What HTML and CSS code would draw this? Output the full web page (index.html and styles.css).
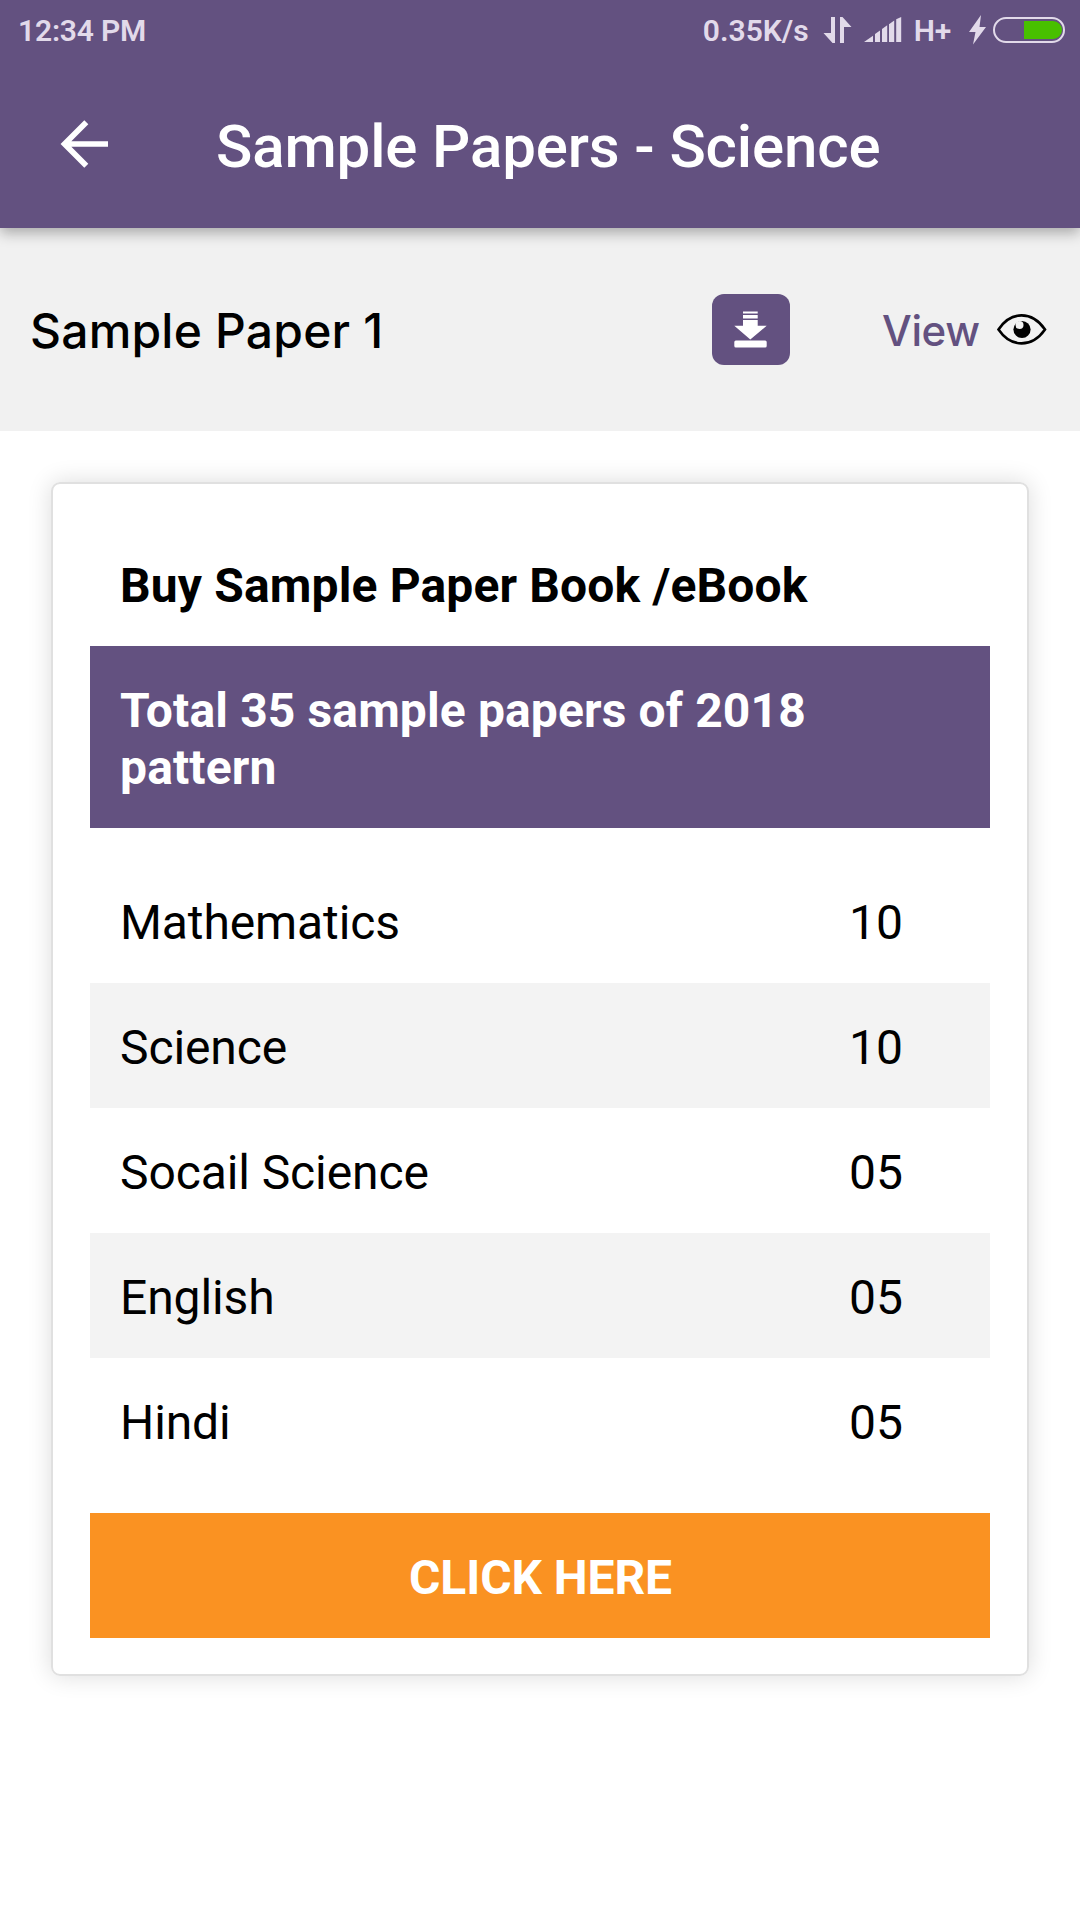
FILE: index.html
```
<!DOCTYPE html>
<html lang="en">
<head>
<meta charset="UTF-8">
<meta name="viewport" content="width=device-width, initial-scale=1.0">
<title>Sample Papers - Science</title>
<link rel="stylesheet" href="styles.css">
</head>
<body>

<header class="header">
    <div class="status-bar">
        <span class="time">12:34 PM</span>
        <div class="status-icons">
            <span class="speed">0.35K/s</span>
            <svg class="icon-data" width="30" height="30" viewBox="0 0 30 30" fill="#e2daea">
                <path d="M10 2h4v26h-2.5L2.5 18H10z"/>
                <path d="M19 28V2h2.5l9 10H23v16z"/>
            </svg>
            <svg class="icon-signal" width="38" height="26" viewBox="0 0 38 26" fill="#e2daea">
                <path d="M0 25l9-6.3V25zM11 25v-8l5-3.6V25zM18 25V12l5.2-3.8V25zM25 25V7.2l5.2-3.8V25zM32.2 25V2.2L37.2 0v25z"/>
            </svg>
            <span class="network">H+</span>
            <svg class="icon-bolt" width="18" height="30" viewBox="0 0 18 30" fill="#e2daea">
                <path d="M12 0L0 17h6.5L4 29.500 17 12h-6.500z"/>
            </svg>
            <div class="battery"><div class="battery-level"></div></div>
        </div>
    </div>
    <div class="toolbar">
        <svg class="back" width="48" height="48" viewBox="0 0 48 48" fill="none" stroke="#fff" stroke-width="5.7">
            <path d="M48 24H5M26.300 2.300L4.600 24l21.700 21.700"/>
        </svg>
        <h1 class="title">Sample Papers - Science</h1>
    </div>
</header>

<div class="paper">
    <span class="paper-name">Sample Paper 1</span>
    <button class="download">
        <svg width="33" height="37" viewBox="0 0 33 37" fill="#fff">
            <path d="M9 .5h14.700v2H9zM9 4h14.700v3.500H9zM9 9h14.700v5.700h9L16.300 28.500 .3 14.700H9z"/>
            <rect x=".3" y="29.600" width="32.400" height="7" rx="1.500"/>
        </svg>
    </button>
    <a class="view">View</a>
    <svg class="eye" width="50" height="32" viewBox="0 0 50 32">
        <path d="M1.500 15.500C14-3.300 35-3.300 48 15.500 35 34 14 34 1.500 15.500z" fill="none" stroke="#000" stroke-width="2.600"/>
        <circle cx="25" cy="15.500" r="8.600"/>
        <circle cx="22.500" cy="11" r="4" fill="#f1f1f1"/>
    </svg>
</div>

<div class="card">
    <h2 class="card-title">Buy Sample Paper Book /eBook</h2>
    <div class="banner">Total 35 sample papers of 2018 pattern</div>
    <div class="subjects">
        <div class="row"><span class="subject">Mathematics</span><span>10</span></div>
        <div class="row"><span class="subject">Science</span><span>10</span></div>
        <div class="row"><span class="subject">Socail Science</span><span>05</span></div>
        <div class="row"><span class="subject">English</span><span>05</span></div>
        <div class="row"><span class="subject">Hindi</span><span>05</span></div>
    </div>
    <button class="buy">CLICK HERE</button>
</div>

</body>
</html>
```
FILE: styles.css
```
* {
    box-sizing: border-box;
}

body {
    margin: 0;
    min-height: 100vh;
    background-color: #fff;
    font-family: Roboto, "Liberation Sans", sans-serif;
    color: #000;
}

svg {
    display: block;
    flex: none;
    overflow: visible;
}

.header {
    position: relative;
    height: 228px;
    background-color: #635180;
    box-shadow: 0 5px 13px rgba(0, 0, 0, 0.3);
}

.status-bar {
    display: flex;
    justify-content: space-between;
    height: 60px;
    padding: 0 15px 0 18px;
    align-items: center;
    color: #e2daea;
    font-size: 30px;
    font-weight: 600;
}

.time {
    letter-spacing: -0.2px;
}

.status-icons {
    display: flex;
    align-items: center;
}

.icon-data {
    margin-left: 12px;
}

.icon-signal {
    margin-left: 13px;
}

.network {
    margin-left: 12px;
    letter-spacing: -0.2px;
}

.icon-bolt {
    margin-left: 18px;
}

.battery {
    width: 72px;
    height: 26px;
    margin-left: 6px;
    padding: 2px 1px;
    border: 2px solid #e2daea;
    border-radius: 13px;
}

.battery-level {
    width: 38px;
    height: 18px;
    margin-left: auto;
    border-radius: 0 9px 9px 0;
    background-color: #48c000;
}

.toolbar {
    display: flex;
    align-items: center;
    height: 168px;
    padding: 0 60px;
}

.title {
    margin: 6px 0 0 108px;
    color: #fff;
    font-size: 60px;
    line-height: 70px;
    font-weight: 500;
    letter-spacing: -0.13px;
}

.paper {
    display: flex;
    align-items: center;
    height: 203px;
    padding: 0 33px 0 30px;
    background-color: #f1f1f1;
    font-family: Inter, "Liberation Sans", sans-serif;
}

.paper-name {
    padding-top: 2px;
    font-size: 48px;
    font-weight: 450;
    letter-spacing: 0.2px;
}

.download {
    display: flex;
    align-items: center;
    justify-content: center;
    width: 78px;
    height: 71px;
    margin-left: auto;
    padding: 0 1px 0 0;
    border: none;
    border-radius: 12px;
    background-color: #635180;
}

.view {
    width: 98px;
    margin-left: 92px;
    padding-top: 2px;
    color: #635180;
    font-size: 42px;
    font-weight: 450;
    letter-spacing: -0.4px;
}

.eye {
    margin-left: 17px;
}

.card {
    width: 978px;
    margin: 51px auto 0;
    padding: 68px 37px 36px;
    border: 2px solid #e0e0e0;
    border-radius: 9px;
    box-shadow: 0 0 24px rgba(0, 0, 0, 0.14);
    font-size: 48px;
    line-height: 57px;
}

.card-title {
    margin: 0;
    padding: 5px 30px 32px;
    font-size: 48px;
    font-weight: 700;
    letter-spacing: 0.15px;
}

.banner {
    height: 182px;
    padding: 36px 30px;
    background-color: #635180;
    color: #fff;
    font-weight: 700;
    letter-spacing: 0.13px;
}

.subjects {
    margin: 30px 0;
}

.row {
    display: flex;
    justify-content: space-between;
    height: 125px;
    padding: 36px 87px 0 30px;
}

.row:nth-child(even) {
    background-color: #f3f3f3;
}

.subject {
    letter-spacing: -0.1px;
}

.buy {
    display: block;
    width: 100%;
    height: 125px;
    padding: 4px 0 0 1px;
    border: none;
    background-color: #fa9222;
    color: #fff;
    font-family: inherit;
    font-size: 48px;
    font-weight: 700;
    letter-spacing: -0.1px;
}
```
